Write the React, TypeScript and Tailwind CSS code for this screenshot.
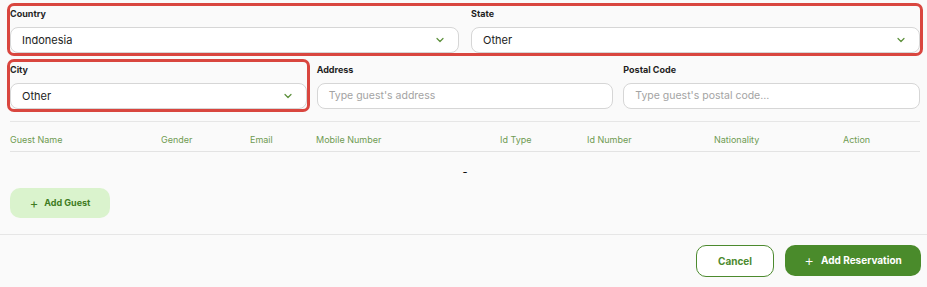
import React from "react";

const Chevron = () => (
  <svg width="8" height="6" viewBox="0 0 8 6" fill="none">
    <polyline points="1,1.5 4,4.5 7,1.5" stroke="#5b8f3a" strokeWidth="1.2" strokeLinecap="round" strokeLinejoin="round" />
  </svg>
);

const Label = ({ children }: { children: React.ReactNode }) => (
  <div className="text-[9px] font-bold leading-[12px] text-[#1f1f1f]">{children}</div>
);

const Select = ({ value }: { value: string }) => (
  <div className="mt-[7px] flex h-[26px] items-center justify-between rounded-[8px] border border-[#d6d6d6] bg-white pl-[11px] pr-[14px]">
    <span className="text-[11px] text-[#222]">{value}</span>
    <Chevron />
  </div>
);

const Input = ({ placeholder }: { placeholder: string }) => (
  <div className="mt-[7px] flex h-[26px] items-center rounded-[8px] border border-[#d6d6d6] bg-white pl-[11px]">
    <span className="text-[10.5px] text-[#a3a3a3]">{placeholder}</span>
  </div>
);

const RedBox = () => (
  <div className="pointer-events-none absolute -bottom-[3px] -left-[3px] -right-[3px] -top-[5px] rounded-[7px] border-[3px] border-[#d9463f]" />
);

export default function App() {
  const headers = ["Guest Name", "Gender", "Email", "Mobile Number", "Id Type", "Id Number", "Nationality", "Action"];
  return (
    <div className="h-[287px] w-full overflow-hidden bg-[#fafafa]" style={{ fontFamily: "Inter, 'Noto Sans', sans-serif" }}>
      <div className="pl-[10px] pr-[7px] pt-[8px]">
        <div className="relative grid grid-cols-2 gap-x-[12px]">
          <RedBox />
          <div>
            <Label>Country</Label>
            <Select value="Indonesia" />
          </div>
          <div>
            <Label>State</Label>
            <Select value="Other" />
          </div>
        </div>
        <div className="mt-[11px] grid grid-cols-3 gap-x-[10px]">
          <div className="relative">
            <RedBox />
            <Label>City</Label>
            <Select value="Other" />
          </div>
          <div>
            <Label>Address</Label>
            <Input placeholder="Type guest's address" />
          </div>
          <div>
            <Label>Postal Code</Label>
            <Input placeholder="Type guest's postal code..." />
          </div>
        </div>
        <div className="mt-[12px] border-t border-[#e6e6e6]">
          <div className="grid grid-cols-[151px_89px_66px_184px_87px_127px_129px_1fr] border-b border-[#e3e3e3] pb-[5px] pt-[12px]">
            {headers.map((h) => (
              <div key={h} className="text-[9px] leading-[12px] text-[#6f9b52]">
                {h}
              </div>
            ))}
          </div>
          <div className="pt-[14px] text-center text-[11px] leading-[12px] text-black">-</div>
          <button className="mt-[10px] flex h-[30px] w-[100px] items-center justify-center gap-[6px] rounded-[10px] bg-[#daf3cd] text-[9px] font-bold text-[#3f7c23]">
            <span className="text-[13px] font-normal leading-none">+</span>
            Add Guest
          </button>
        </div>
      </div>
      <div className="mt-[16px] flex justify-end gap-[11px] border-t border-[#e6e6e6] pr-[6px] pt-[10px]">
        <button className="flex h-[32px] w-[78px] items-center justify-center rounded-[10px] border border-[#4c8a2e] bg-white text-[10px] font-bold text-[#4c8a2e]">
          Cancel
        </button>
        <button className="flex h-[31px] w-[136px] items-center justify-center gap-[7px] rounded-[10px] bg-[#4a8b2b] text-[10px] font-bold text-white">
          <span className="text-[15px] font-light leading-none">+</span>
          Add Reservation
        </button>
      </div>
    </div>
  );
}
